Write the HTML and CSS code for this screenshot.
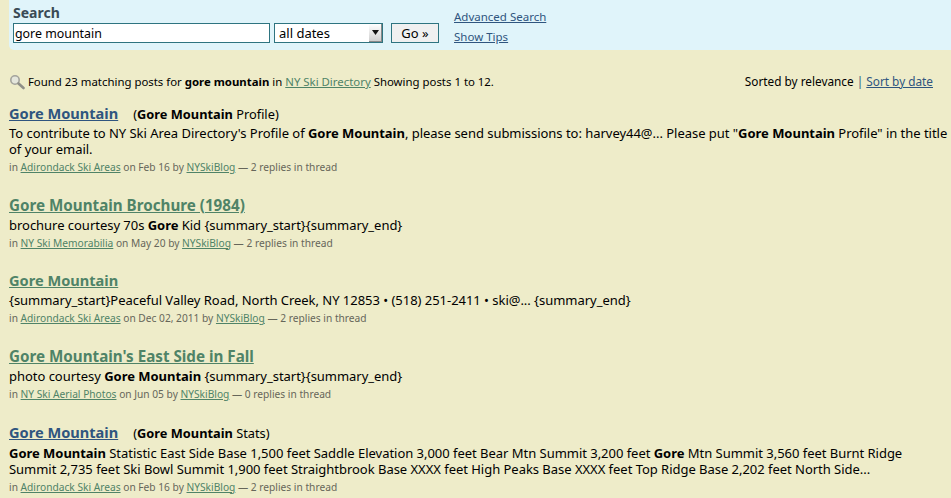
FILE: index.html
```html
<!DOCTYPE html>
<html lang="en">
<head>
<meta charset="utf-8">
<title>Search</title>
<link rel="stylesheet" href="styles.css">
</head>
<body>
<form class="search">
  <div class="search-main">
    <div class="search-label">Search</div>
    <div class="search-row">
      <input class="query" type="text" value="gore mountain">
      <div class="dates"><span>all dates</span><span class="arrow"><svg width="7" height="5" viewBox="0 0 7 5"><path d="M0 0h7L3.500 5z" fill="#111"/></svg></span></div>
      <button class="go" type="button">Go »</button>
    </div>
  </div>
  <div class="search-links">
    <a href="#" class="blue">Advanced Search</a>
    <a href="#" class="blue">Show Tips</a>
  </div>
</form>
<div class="summary">
  <p class="found">
    <svg class="mag" width="16" height="16" viewBox="0 0 16 16"><circle cx="6" cy="6" r="4.200" fill="#e4e6dc" stroke="#a3a39c" stroke-width="1.600"/><path d="M9.500 9.500l5 4.500" stroke="#8f8f88" stroke-width="2.600" stroke-linecap="round"/></svg>
    Found 23 matching posts for <b>gore mountain</b> in <a href="#" class="green">NY Ski Directory</a> Showing posts 1 to 12.
  </p>
  <p class="sort">Sorted by relevance <span class="sep">|</span> <a href="#" class="blue">Sort by date</a></p>
</div>
<article class="post">
  <h2><a href="#" class="blue short">Gore Mountain</a><span class="sub">(<b>Gore Mountain</b> Profile)</span></h2>
  <p class="text">To contribute to NY Ski Area Directory's Profile of <b>Gore Mountain</b>, please send submissions to: harvey44@... Please put "<b>Gore Mountain</b> Profile" in the title of your email.</p>
  <p class="meta">in <a href="#" class="green">Adirondack Ski Areas</a> on Feb 16 by <a href="#" class="green">NYSkiBlog</a> — 2 replies in thread</p>
</article>
<article class="post">
  <h2><a href="#" class="green">Gore Mountain Brochure (1984)</a></h2>
  <p class="text">brochure courtesy 70s <b>Gore</b> Kid {summary_start}{summary_end}</p>
  <p class="meta">in <a href="#" class="green">NY Ski Memorabilia</a> on May 20 by <a href="#" class="green">NYSkiBlog</a> — 2 replies in thread</p>
</article>
<article class="post">
  <h2><a href="#" class="green short">Gore Mountain</a></h2>
  <p class="text">{summary_start}Peaceful Valley Road, North Creek, NY 12853 • (518) 251-2411 • ski@... {summary_end}</p>
  <p class="meta">in <a href="#" class="green">Adirondack Ski Areas</a> on Dec 02, 2011 by <a href="#" class="green">NYSkiBlog</a> — 2 replies in thread</p>
</article>
<article class="post">
  <h2><a href="#" class="green">Gore Mountain's East Side in Fall</a></h2>
  <p class="text">photo courtesy <b>Gore Mountain</b> {summary_start}{summary_end}</p>
  <p class="meta">in <a href="#" class="green">NY Ski Aerial Photos</a> on Jun 05 by <a href="#" class="green">NYSkiBlog</a> — 0 replies in thread</p>
</article>
<article class="post">
  <h2><a href="#" class="blue short">Gore Mountain</a><span class="sub">(<b>Gore Mountain</b> Stats)</span></h2>
  <p class="text"><b>Gore Mountain</b> Statistic East Side Base 1,500 feet Saddle Elevation 3,000 feet Bear Mtn Summit 3,200 feet <b>Gore</b> Mtn Summit 3,560 feet Burnt Ridge Summit 2,735 feet Ski Bowl Summit 1,900 feet Straightbrook Base XXXX feet High Peaks Base XXXX feet Top Ridge Base 2,202 feet North Side...</p>
  <p class="meta">in <a href="#" class="green">Adirondack Ski Areas</a> on Feb 16 by <a href="#" class="green">NYSkiBlog</a> — 2 replies in thread</p>
</article>
</body>
</html>
```
FILE: styles.css
```css
* { box-sizing: border-box; }
html, body { height: 100%; }
body {
  margin: 0;
  padding: 0 0 0 9px;
  background: #eeecc9;
  color: #000;
  font-family: "Noto Sans", sans-serif;
  font-size: 13px;
  line-height: 17px;
  overflow: hidden;
}
a { text-decoration: underline; }
.blue { color: #2f557f; }
.green { color: #4f8367; }
p { margin: 0; }
.search {
  display: flex;
  gap: 15px;
  height: 50px;
  padding: 4px 0 0 4px;
  background: #e0f4fa;
  border-bottom-left-radius: 5px;
}
.search-label { font-weight: bold; font-size: 14px; color: #3a4a55; line-height: 18px; }
.search-row { display: flex; gap: 4px; margin-top: 1px; }
.query, .dates, .go {
  height: 20px;
  border: 1px solid #2e7480;
  font: inherit;
  color: #000;
}
.query { width: 257px; padding: 0 1px; background: #fff; outline: none; font-size: 12.400px; }
.dates {
  width: 109px;
  padding-left: 4px;
  background: #fff;
  display: flex;
  justify-content: space-between;
  line-height: 18px;
}
.arrow {
  width: 13px;
  background: linear-gradient(#fff, #cfcfcf);
  border-right: 1px solid #888;
  border-bottom: 1px solid #888;
  display: flex;
  align-items: center;
  justify-content: center;
}
.go { width: 48px; margin-left: 4px; padding: 0; background: #f0f0f0; }
.search-links {
  display: flex;
  flex-direction: column;
  align-items: flex-start;
  gap: 3px;
  padding-top: 4px;
  font-size: 11.500px;
}
.summary {
  display: flex;
  justify-content: space-between;
  padding: 23px 18px 0 0;
}
.found { font-size: 11.400px; }
.sort { font-size: 11.800px; }
.mag { vertical-align: -4px; }
.sep { color: #2f557f; }
.post { margin-bottom: 17.670px; }
.summary + .post { margin-top: 13px; margin-bottom: 17.670px; }
h2 { margin: 0; font-size: 15.200px; font-weight: bold; line-height: 24px; }
.summary + .post h2 { line-height: 21px; }
.short { font-size: 14.600px; }
.sub { margin-left: 15px; font-size: 12.800px; font-weight: normal; }
.text { line-height: 16px; letter-spacing: -0.030px; }
.meta { font-size: 10.200px; color: #66665a; line-height: 16px; margin-top: 2px; }
```
